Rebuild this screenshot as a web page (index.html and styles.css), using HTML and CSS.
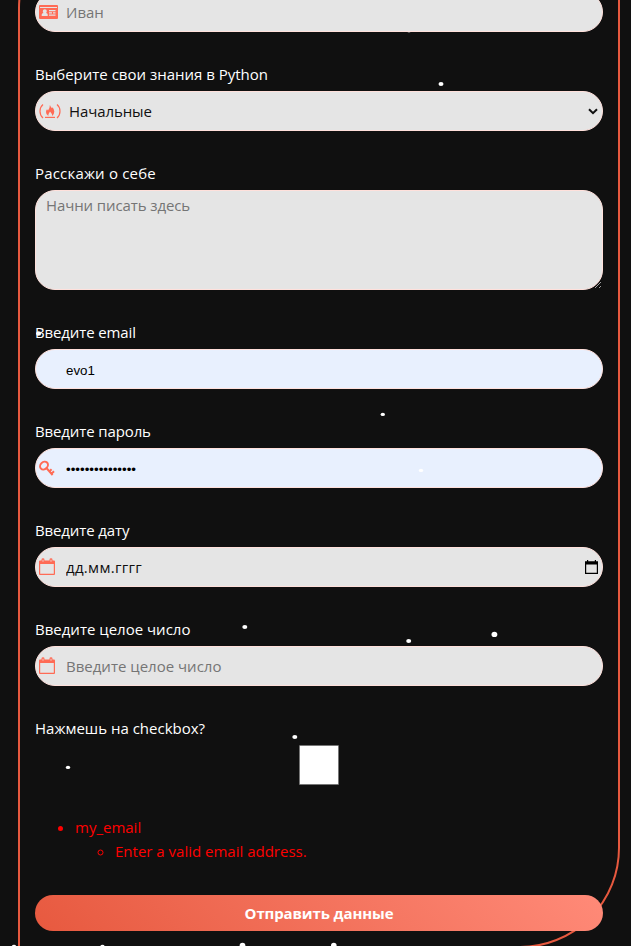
FILE: index.html
```html
<!DOCTYPE html>
<html lang="ru">
<head>
<meta charset="utf-8">
<title>Форма</title>
<link rel="stylesheet" href="styles.css">
</head>
<body>
<form class="frame">
  <div class="field">
    <div class="control">
      <svg class="icon" width="19" height="14" viewBox="0 0 19 14"><path fill="#ff6b55" fill-rule="evenodd" d="M1 0H18Q19 0 19 1V13Q19 14 18 14H1Q0 14 0 13V1Q0 0 1 0ZM1 2V3H18V2ZM2.7 11H8.7V9.5Q8.7 8.4 7 8.1Q7.8 7.3 7.8 6Q7.8 4.2 5.8 4.2Q3.8 4.2 3.8 6Q3.8 7.3 4.5 8.1Q2.7 8.4 2.7 9.5ZM10 5V6.2H16.5V5ZM10 7.2V8.4H13V7.2ZM14 7.2V8.4H16.5V7.2ZM10 9.6V10.8H16.5V9.6Z"/></svg>
      <input class="input" type="text" placeholder="Иван">
    </div>
  </div>
  <div class="field">
    <label class="label">Выберите свои знания в Python</label>
    <div class="control">
      <svg class="icon" width="22" height="15" viewBox="0 0 22 15"><g fill="none" stroke="#ff6b55" stroke-width="1.2"><path d="M4 .5Q1 3 1 7.2T4 14M18 .5Q21 3 21 7.2T18 14"/><path d="M6 13.4H16"/></g><path fill="#ff6b55" fill-rule="evenodd" d="M10.9 1Q11.6 3 13 4.3L13.5 3.2Q15.3 5.2 15.3 7.5Q15.3 10.2 13.2 12Q13.2 9.7 11 7.5Q9.2 9.8 9.3 12Q7 10.8 7 8Q7 6.5 8 5.3L9 6.5Q10.9 4 10.9 1Z"/></svg>
      <div class="input select">Начальные</div>
      <svg class="chevron" width="10" height="7" viewBox="0 0 10 7"><path d="M1 1.2L5 5.2L9 1.2" fill="none" stroke="#101010" stroke-width="2"/></svg>
    </div>
  </div>
  <div class="field">
    <label class="label wide">Расскажи о себе</label>
    <textarea class="input area" placeholder="Начни писать здесь"></textarea>
  </div>
  <div class="field">
    <label class="label tight">Введите email</label>
    <div class="control"><input class="input filled" type="text" value="evo1"></div>
  </div>
  <div class="field">
    <label class="label tight">Введите пароль</label>
    <div class="control">
      <svg class="icon" width="16" height="16" viewBox="0 0 16 16"><g fill="none" stroke="#ff6b55" stroke-width="2"><ellipse cx="5" cy="5.6" rx="4.3" ry="3.5" transform="rotate(-45 5 5.6)"/><path d="M7.4 8L13.6 15M10.4 11.4L12.6 9.2M12.6 13.6L15 11.2"/></g></svg>
      <input class="input filled" type="password" value="evolution123456">
    </div>
  </div>
  <div class="field">
    <label class="label tight">Введите дату</label>
    <div class="control">
      <svg class="icon calendar" width="16" height="17" viewBox="0 0 16 17"><path fill="#ff6b55" fill-rule="evenodd" d="M0 3.5Q0 2.5 1 2.5H2.5V1.7Q2.5 .3 4 .3T5.5 1.7V2.5H10.5V1.7Q10.5 .3 12 .3T13.5 1.7V2.5H15Q16 2.5 16 3.5V16Q16 17 15 17H1Q0 17 0 16ZM1.2 6V15.7H14.8V6ZM3.6 1.7V3.8H4.4V1.7ZM11.6 1.7V3.8H12.4V1.7Z"/></svg>
      <input class="input date" type="text" value="дд.мм.гггг">
      <svg class="picker" width="13" height="15" viewBox="0 0 13 15"><path fill="#000" fill-rule="evenodd" d="M0 1.3H2V0H3.2V1.3H9.8V0H11V1.3H13V14H0ZM1.2 4.5V12.8H11.8V4.5Z"/></svg>
    </div>
  </div>
  <div class="field">
    <label class="label">Введите целое число</label>
    <div class="control">
      <svg class="icon calendar" width="16" height="17" viewBox="0 0 16 17"><path fill="#ff6b55" fill-rule="evenodd" d="M0 3.5Q0 2.5 1 2.5H2.5V1.7Q2.5 .3 4 .3T5.5 1.7V2.5H10.5V1.7Q10.5 .3 12 .3T13.5 1.7V2.5H15Q16 2.5 16 3.5V16Q16 17 15 17H1Q0 17 0 16ZM1.2 6V15.7H14.8V6ZM3.6 1.7V3.8H4.4V1.7ZM11.6 1.7V3.8H12.4V1.7Z"/></svg>
      <input class="input" type="text" placeholder="Введите целое число">
    </div>
  </div>
  <div class="field">
    <label class="label">Нажмешь на checkbox?</label>
    <div class="checkbox"></div>
  </div>
  <ul class="errors">
    <li>my_email
      <ul><li>Enter a valid email address.</li></ul>
    </li>
  </ul>
  <button class="submit" type="button">Отправить данные</button>
</form>
<svg class="snow" width="631" height="946" viewBox="0 0 631 946" fill="#fff">
  <ellipse cx="409" cy="32.2" rx="1.4" ry=".5" opacity=".4"/>
  <ellipse cx="441" cy="84" rx="2.5" ry="2.1"/>
  <ellipse cx="38.6" cy="333.5" rx="2.6" ry="2.2"/>
  <ellipse cx="382.8" cy="414.4" rx="2.2" ry="1.6"/>
  <ellipse cx="421" cy="470.4" rx="2.2" ry="1.6"/>
  <ellipse cx="244.8" cy="627" rx="2.5" ry="2.1"/>
  <ellipse cx="408.7" cy="641" rx="2.5" ry="2.1"/>
  <ellipse cx="494.4" cy="634.4" rx="2.9" ry="2.6"/>
  <ellipse cx="294.8" cy="737" rx="2.5" ry="2.1"/>
  <ellipse cx="68" cy="767.4" rx="2.2" ry="1.6"/>
  <circle cx="14" cy="947" r="2.3"/>
  <circle cx="102.5" cy="947" r="2.3"/>
  <circle cx="242.5" cy="945.6" r="2.9"/>
  <circle cx="333.8" cy="945.6" r="2.8"/>
</svg>
</body>
</html>
```
FILE: styles.css
```css
* { box-sizing: border-box; }
html, body { margin: 0; height: 946px; overflow: hidden; background: #101010; }
body { font-family: "Open Sans", "Noto Sans", sans-serif; font-size: 15px; line-height: 24px; color: #fff; display: flow-root; }
.frame {
  width: 602px;
  height: 1040px;
  margin: -92px 0 0 18px;
  padding: 82px 15px 0;
  border: 2px solid #e7593f;
  border-radius: 100px 0 100px 0;
}
.field { display: flex; flex-direction: column; align-items: flex-start; margin-bottom: 30px; }
.label { display: block; height: 24px; margin-bottom: 5px; white-space: nowrap; }
.tight { letter-spacing: -.12px; }
.wide { letter-spacing: .18px; }
.control { display: grid; width: 100%; align-items: center; }
.control > * { grid-area: 1 / 1; }
.icon { z-index: 1; margin-left: 4px; }
.calendar { position: relative; top: -1px; }
.input {
  display: block;
  width: 100%;
  height: 40px;
  margin: 0;
  padding: 0 10px 0 30px;
  border: 1px solid #ffe0db;
  border-radius: 20px;
  background: #e5e5e5;
  color: #101010;
  font: 15px/24px "Open Sans", "Noto Sans", sans-serif;
  outline: none;
}
.input::placeholder { color: #757575; opacity: 1; }
.select { padding: 7px 10px 7px 33px; letter-spacing: -.1px; }
.area { height: 100px; padding: 2px 10px; letter-spacing: -.1px; resize: vertical; }
.filled { background: #e8f0fe; color: #000; font: 13.33px "Liberation Sans", sans-serif; padding-top: 2px; }
.date { letter-spacing: .3px; }
.chevron { justify-self: end; margin-right: 5px; }
.picker { justify-self: end; margin-right: 5px; }
.checkbox { align-self: center; width: 40px; height: 40px; background: #fff; border: 1px solid #767676; border-radius: 1px; }
.errors { margin: 0 0 32px; padding-left: 40px; color: #f00; }
.errors ul { margin: 0; padding-left: 40px; }
.submit {
  display: block;
  width: 100%;
  height: 36px;
  padding: 0;
  border: 0;
  border-radius: 18px;
  background: linear-gradient(45deg, #e7593f, #ff8a78);
  color: #fff;
  font: 700 15px/36px "Open Sans", "Noto Sans", sans-serif;
  letter-spacing: -.12px;
}
.snow { position: absolute; left: 0; top: 0; pointer-events: none; }
```
